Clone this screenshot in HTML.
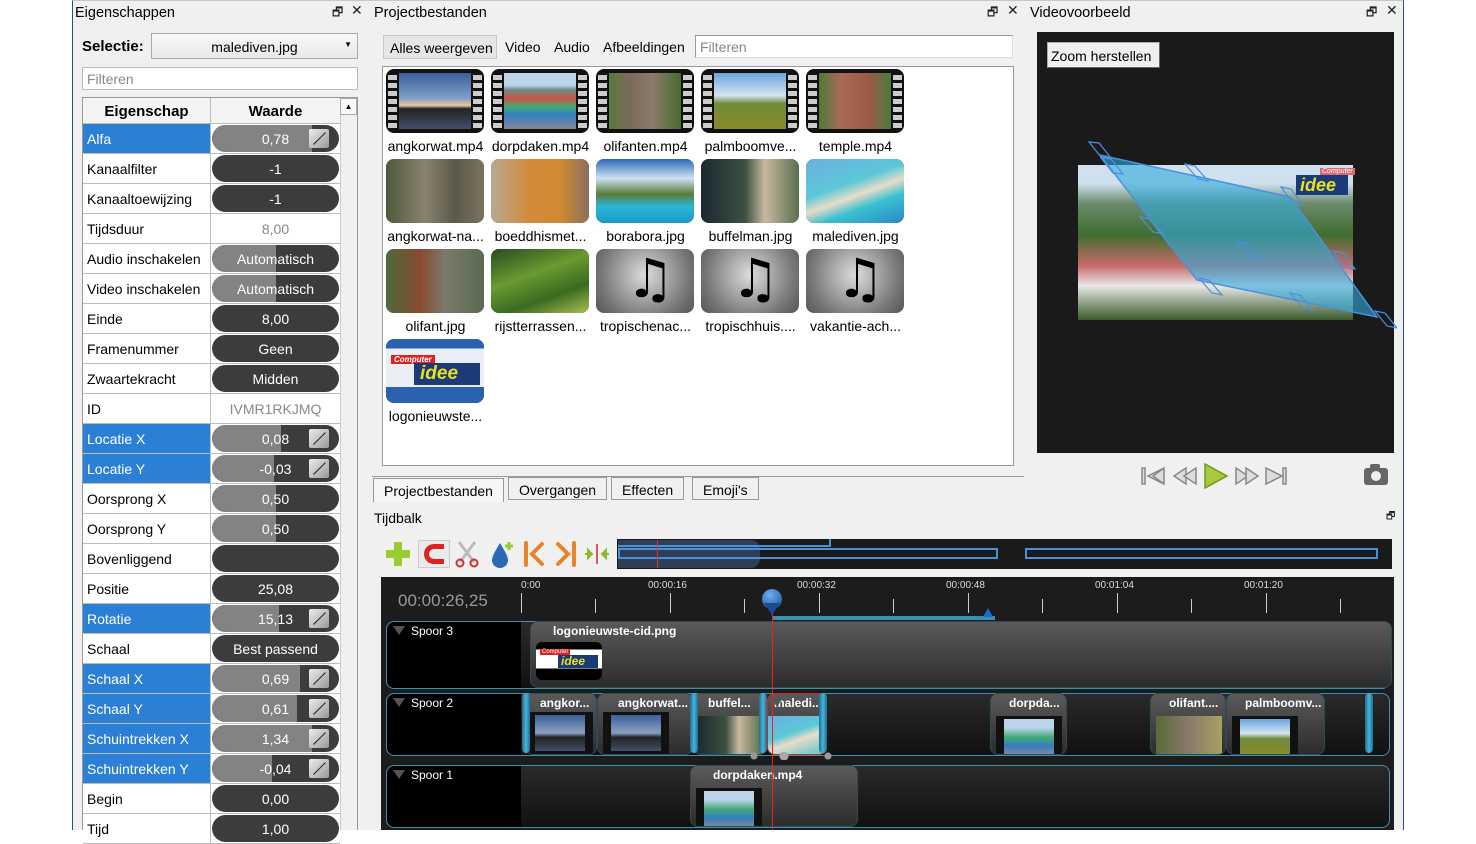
<!DOCTYPE html>
<html><head><meta charset="utf-8">
<style>
*{margin:0;padding:0;box-sizing:border-box}
body{width:1476px;height:830px;background:#fff;position:relative;overflow:hidden;font-family:"Liberation Sans",sans-serif;font-size:14px;color:#000;white-space:nowrap}
.a{position:absolute}
.win{position:absolute;left:72px;top:0;width:1332px;height:830px;background:#f0f0f0;border-left:1px solid #2a4a8a;border-right:1px solid #2a4a8a;border-top:1px solid #c8c8c8}
.ttl{position:absolute;font-size:14.5px}
.ic{position:absolute;font-size:12px;color:#222}
.row{position:absolute;left:83px;width:257px;height:30px;border-bottom:1px solid #bcbcbc;background:#fff}
.row .n{position:absolute;left:0;top:0;width:128px;height:29px;padding:7px 0 0 4px;border-right:1px solid #bcbcbc;font-size:14px}
.row.b .n{background:#2b80d6;color:#fff}
.pill{position:absolute;left:129px;top:1px;width:127px;height:27px;border-radius:14px;background:#3c3c3c;overflow:hidden;color:#fff;text-align:center;line-height:29px;font-size:14px}
.pill .f{position:absolute;left:0;top:0;bottom:0;background:#838383}
.pill span{position:relative}
.cv{position:absolute;right:10px;top:4px;width:20px;height:19px;background:linear-gradient(135deg,#eee,#999);border-radius:2px}
.cv:after{content:"";position:absolute;left:2px;top:9px;width:17px;height:1px;background:#222;transform:rotate(-45deg)}
.pv{position:absolute;left:129px;top:0;width:127px;text-align:center;line-height:31px;color:#888}
.th{position:absolute;width:98px;height:64px;border-radius:8px;overflow:hidden;background:#111}
.th .im{position:absolute;left:13px;right:13px;top:4px;bottom:4px}
.th.p .im{left:0;right:0;top:0;bottom:0}
.th.v:before,.th.v:after{content:"";position:absolute;top:3px;bottom:3px;width:9px;background:repeating-linear-gradient(#111 0 3px,#ccc 3px 8px);left:2px}
.th.v:after{left:auto;right:2px}
.lb{position:absolute;width:105px;text-align:center;font-size:14px}
.mu{background:radial-gradient(circle at 50% 40%,#ddd,#777 70%,#555);}
.mu b{position:absolute;left:30px;top:0;font-size:54px;line-height:60px;color:#000;font-weight:normal;font-family:"DejaVu Sans",sans-serif}
.tab{position:absolute;top:477px;height:23px;border:1px solid #999;background:#f0f0f0;padding:4px 10px;font-size:14px}
.trk{position:absolute;left:386px;width:1004px;border:1px solid #3d8fae;border-radius:8px;background:linear-gradient(#2a2a2a,#111)}
.trh{position:absolute;left:0;top:0;width:134px;height:100%;background:#000;border-radius:8px 0 0 8px;color:#fff;padding:2px 0 0 24px;font-size:12px}
.trh:before,.clip .t:before{content:"";position:absolute;left:6px;top:4px;border-left:6px solid transparent;border-right:6px solid transparent;border-top:9px solid #555}
.clip{position:absolute;border-radius:8px;background:linear-gradient(#5a5a5a,#2c2c2c);border:1px solid #2e4a58;overflow:hidden}
.clip .t{position:absolute;left:0;top:0;right:0;color:#fff;font-weight:bold;font-size:12px;padding:2px 0 0 18px;overflow:hidden}
.clip .t:before{left:3px}
.ct{position:absolute;width:66px;height:42px;background:#111}
.ct .im{position:absolute;left:8px;right:8px;top:3px;bottom:3px}
.hd{position:absolute;width:8px;border-radius:4px;background:linear-gradient(90deg,#1b6f92,#4ab3d8,#1b6f92)}
.tk{position:absolute;width:1px;background:#ccc}
.tl{position:absolute;color:#ddd;font-size:10px}
</style></head><body>
<div class="win"></div>

<div class="ttl" style="left:75px;top:5px">Eigenschappen</div>
<div class="ic" style="left:332px;top:3px">🗗</div><div class="ic" style="left:351px;top:2px;font-size:14px">✕</div>
<div class="a" style="left:82px;top:38px;font-weight:bold;font-size:15px">Selectie:</div>
<div class="a" style="left:151px;top:33px;width:207px;height:26px;border:1px solid #aaa;background:linear-gradient(#f8f8f8,#e8e8e8);text-align:center;line-height:26px;font-size:14px">malediven.jpg<span style="position:absolute;right:5px;top:-2px;font-size:8px">▼</span></div>
<div class="a" style="left:82px;top:67px;width:276px;height:23px;border:1px solid #bbb;background:#fff;color:#888;padding:3px 4px;font-size:14px">Filteren</div>
<div class="a" style="left:82px;top:97px;width:276px;height:733px;border:1px solid #999;background:#fff"></div>
<div class="a" style="left:83px;top:98px;width:128px;height:26px;background:#f4f4f4;border-right:1px solid #bbb;border-bottom:1px solid #bbb;font-weight:bold;text-align:center;line-height:27px;font-size:15px">Eigenschap</div>
<div class="a" style="left:211px;top:98px;width:129px;height:26px;background:#f4f4f4;border-bottom:1px solid #bbb;font-weight:bold;text-align:center;line-height:27px;font-size:15px">Waarde</div>
<div class="a" style="left:340px;top:98px;width:17px;height:732px;background:#f0f0f0;border-left:1px solid #ccc"></div>
<div class="a" style="left:340px;top:98px;width:17px;height:17px;border:1px solid #aaa;background:#f8f8f8;font-size:8px;text-align:center;line-height:15px">▲</div>

<div class="row b" style="top:124px"><div class="n">Alfa</div><div class="pill"><div class="f" style="width:100px"></div><span>0,78</span><div class="cv"></div></div></div>
<div class="row" style="top:154px"><div class="n">Kanaalfilter</div><div class="pill"><span>-1</span></div></div>
<div class="row" style="top:184px"><div class="n">Kanaaltoewijzing</div><div class="pill"><span>-1</span></div></div>
<div class="row" style="top:214px"><div class="n">Tijdsduur</div><div class="pv">8,00</div></div>
<div class="row" style="top:244px"><div class="n">Audio inschakelen</div><div class="pill"><div class="f" style="width:64px"></div><span>Automatisch</span></div></div>
<div class="row" style="top:274px"><div class="n">Video inschakelen</div><div class="pill"><div class="f" style="width:64px"></div><span>Automatisch</span></div></div>
<div class="row" style="top:304px"><div class="n">Einde</div><div class="pill"><span>8,00</span></div></div>
<div class="row" style="top:334px"><div class="n">Framenummer</div><div class="pill"><span>Geen</span></div></div>
<div class="row" style="top:364px"><div class="n">Zwaartekracht</div><div class="pill"><span>Midden</span></div></div>
<div class="row" style="top:394px"><div class="n">ID</div><div class="pv">IVMR1RKJMQ</div></div>
<div class="row b" style="top:424px"><div class="n">Locatie X</div><div class="pill"><div class="f" style="width:69px"></div><span>0,08</span><div class="cv"></div></div></div>
<div class="row b" style="top:454px"><div class="n">Locatie Y</div><div class="pill"><div class="f" style="width:62px"></div><span>-0,03</span><div class="cv"></div></div></div>
<div class="row" style="top:484px"><div class="n">Oorsprong X</div><div class="pill"><div class="f" style="width:64px"></div><span>0,50</span></div></div>
<div class="row" style="top:514px"><div class="n">Oorsprong Y</div><div class="pill"><div class="f" style="width:64px"></div><span>0,50</span></div></div>
<div class="row" style="top:544px"><div class="n">Bovenliggend</div><div class="pill"></div></div>
<div class="row" style="top:574px"><div class="n">Positie</div><div class="pill"><span>25,08</span></div></div>
<div class="row b" style="top:604px"><div class="n">Rotatie</div><div class="pill"><div class="f" style="width:67px"></div><span>15,13</span><div class="cv"></div></div></div>
<div class="row" style="top:634px"><div class="n">Schaal</div><div class="pill"><span>Best passend</span></div></div>
<div class="row b" style="top:664px"><div class="n">Schaal X</div><div class="pill"><div class="f" style="width:88px"></div><span>0,69</span><div class="cv"></div></div></div>
<div class="row b" style="top:694px"><div class="n">Schaal Y</div><div class="pill"><div class="f" style="width:85px"></div><span>0,61</span><div class="cv"></div></div></div>
<div class="row b" style="top:724px"><div class="n">Schuintrekken X</div><div class="pill"><div class="f" style="width:100px"></div><span>1,34</span><div class="cv"></div></div></div>
<div class="row b" style="top:754px"><div class="n">Schuintrekken Y</div><div class="pill"><div class="f" style="width:60px"></div><span>-0,04</span><div class="cv"></div></div></div>
<div class="row" style="top:784px"><div class="n">Begin</div><div class="pill"><span>0,00</span></div></div>
<div class="row" style="top:814px"><div class="n">Tijd</div><div class="pill"><span>1,00</span></div></div>

<div class="ttl" style="left:374px;top:5px">Projectbestanden</div>
<div class="ic" style="left:987px;top:3px">🗗</div><div class="ic" style="left:1007px;top:2px;font-size:14px">✕</div>
<div class="a" style="left:383px;top:35px;width:114px;height:24px;border:1px solid #c8c8c8;background:#e6e6e6;padding:4px 6px;font-size:14px">Alles weergeven</div>
<div class="a" style="left:505px;top:39px;font-size:14px">Video</div>
<div class="a" style="left:554px;top:39px;font-size:14px">Audio</div>
<div class="a" style="left:603px;top:39px;font-size:14px">Afbeeldingen</div>
<div class="a" style="left:695px;top:35px;width:318px;height:23px;border:1px solid #999;border-right-color:#ddd;border-bottom-color:#ddd;background:#fff;color:#888;padding:3px 4px;font-size:14px">Filteren</div>
<div class="a" style="left:382px;top:66px;width:632px;height:400px;border:1px solid #999;background:#fff"></div>

<div class="th v" style="left:386px;top:69px"><div class="im" style="background:linear-gradient(#3a5f9a 0%,#7f9fc9 45%,#e8c7a0 58%,#222 64%,#41506a 100%)"></div></div>
<div class="th v" style="left:491px;top:69px"><div class="im" style="background:linear-gradient(#bcd3ea 0 22%,#6d8b8a 30%,#c54 45%,#4a7 60%,#347ec0 75%,#889 100%)"></div></div>
<div class="th v" style="left:596px;top:69px"><div class="im" style="background:linear-gradient(90deg,#5a7a3a,#7a6a5a 30%,#8b7b6a 60%,#4a6a30)"></div></div>
<div class="th v" style="left:701px;top:69px"><div class="im" style="background:linear-gradient(#6aa4dc,#d6e4f2 40%,#6f8b3a 55%,#8b8a2a)"></div></div>
<div class="th v" style="left:806px;top:69px"><div class="im" style="background:linear-gradient(90deg,#4c7a3a,#a86a55 30%,#9a5a48 70%,#4c7a3a)"></div></div>
<div class="lb" style="left:383px;top:138px">angkorwat.mp4</div>
<div class="lb" style="left:488px;top:138px">dorpdaken.mp4</div>
<div class="lb" style="left:593px;top:138px">olifanten.mp4</div>
<div class="lb" style="left:698px;top:138px">palmboomve...</div>
<div class="lb" style="left:803px;top:138px">temple.mp4</div>

<div class="th p" style="left:386px;top:159px"><div class="im" style="background:linear-gradient(90deg,#4d5a3a,#8a8270 40%,#5a5a48 70%,#7a7260)"></div></div>
<div class="th p" style="left:491px;top:159px"><div class="im" style="background:linear-gradient(90deg,#b8a890,#d28a3a 40%,#d08a30 70%,#8a7060)"></div></div>
<div class="th p" style="left:596px;top:159px"><div class="im" style="background:linear-gradient(#2a68b8,#cfe2f2 30%,#5a7a3a 55%,#29b8d8 75%,#1a98c8)"></div></div>
<div class="th p" style="left:701px;top:159px"><div class="im" style="background:linear-gradient(90deg,#1c2830,#3a5040 45%,#c8b8a0 65%,#5a7050)"></div></div>
<div class="th p" style="left:806px;top:159px"><div class="im" style="background:linear-gradient(160deg,#6ab0e0,#5cc8d8 40%,#e8dcc8 55%,#3ac0d0 70%,#2a88c8)"></div></div>
<div class="lb" style="left:383px;top:228px">angkorwat-na...</div>
<div class="lb" style="left:488px;top:228px">boeddhismet...</div>
<div class="lb" style="left:593px;top:228px">borabora.jpg</div>
<div class="lb" style="left:698px;top:228px">buffelman.jpg</div>
<div class="lb" style="left:803px;top:228px">malediven.jpg</div>

<div class="th p" style="left:386px;top:249px"><div class="im" style="background:linear-gradient(90deg,#4a6a3a,#8a4a30 35%,#7a7a6a 60%,#5a6a50)"></div></div>
<div class="th p" style="left:491px;top:249px"><div class="im" style="background:linear-gradient(160deg,#2a4a20,#6a9a30 40%,#3a6a20 70%,#a8c050)"></div></div>
<div class="th p mu" style="left:596px;top:249px"><b>♫</b></div>
<div class="th p mu" style="left:701px;top:249px"><b>♫</b></div>
<div class="th p mu" style="left:806px;top:249px"><b>♫</b></div>
<div class="lb" style="left:383px;top:318px">olifant.jpg</div>
<div class="lb" style="left:488px;top:318px">rijstterrassen...</div>
<div class="lb" style="left:593px;top:318px">tropischenac...</div>
<div class="lb" style="left:698px;top:318px">tropischhuis....</div>
<div class="lb" style="left:803px;top:318px">vakantie-ach...</div>

<div class="th p" style="left:386px;top:339px"><div class="im" style="background:linear-gradient(#2b62b0 0 15%,#e8eef4 15% 75%,#2b62b0 75%)"></div>
<div class="a" style="left:5px;top:16px;background:#d22;color:#fff;font-size:8px;padding:0 3px;font-style:italic;font-weight:bold">Computer</div>
<div class="a" style="left:28px;top:24px;width:66px;height:22px;background:#1a3a78;color:#e8e020;font-weight:bold;font-style:italic;font-size:19px;line-height:22px;padding-left:6px">idee</div></div>
<div class="lb" style="left:383px;top:408px">logonieuwste...</div>

<div class="a" style="left:372px;top:476px;width:652px;height:1px;background:#999"></div>
<div class="tab" style="left:373px;top:478px;height:24px;border-bottom:none;background:#f6f6f6">Projectbestanden</div>
<div class="tab" style="left:508px">Overgangen</div>
<div class="tab" style="left:611px">Effecten</div>
<div class="tab" style="left:692px">Emoji's</div>
<div class="a" style="left:374px;top:510px;font-size:14px">Tijdbalk</div>
<div class="ic" style="left:1386px;top:509px;font-size:10px">🗗</div>

<div class="a" style="left:386px;top:542px;width:24px;height:24px;background:linear-gradient(90deg,transparent 8px,#9c3 8px 16px,transparent 16px),linear-gradient(transparent 8px,#9c3 8px 16px,transparent 16px)"></div>
<div class="a" style="left:418px;top:540px;width:32px;height:28px;border:1px solid #ccc;background:#eaeaea"></div>
<div class="a" style="left:424px;top:544px;width:20px;height:20px;border:5px solid #d22;border-right:none;border-radius:10px 0 0 10px"></div>
<svg class="a" style="left:454px;top:540px" width="26" height="28"><path d="M5 2 L20 22 M21 2 L6 22" stroke="#bbb" stroke-width="3"/><circle cx="6" cy="23" r="3.5" fill="none" stroke="#c33" stroke-width="2"/><circle cx="20" cy="23" r="3.5" fill="none" stroke="#c33" stroke-width="2"/></svg>
<svg class="a" style="left:489px;top:540px" width="28" height="28"><path d="M11 3 C5 13 3 17 3 20 A8 8 0 0 0 19 20 C19 17 17 13 11 3Z" fill="#2a6ab0"/><path d="M20 2v8M16 6h8" stroke="#9c3" stroke-width="3"/></svg>
<svg class="a" style="left:522px;top:541px" width="26" height="26"><path d="M4 2v22" stroke="#e8842a" stroke-width="4" stroke-linecap="round"/><path d="M20 3 L10 13 L20 23" fill="none" stroke="#e8842a" stroke-width="4" stroke-linecap="round"/></svg>
<svg class="a" style="left:552px;top:541px" width="26" height="26"><path d="M22 2v22" stroke="#e8842a" stroke-width="4" stroke-linecap="round"/><path d="M6 3 L16 13 L6 23" fill="none" stroke="#e8842a" stroke-width="4" stroke-linecap="round"/></svg>
<svg class="a" style="left:583px;top:543px" width="28" height="22"><path d="M2 11h6M5 7l4 4-4 4Z" stroke="#8b3" stroke-width="2" fill="#8b3"/><path d="M14 1v20" stroke="#d22" stroke-width="1.5"/><path d="M26 11h-6M23 7l-4 4 4 4Z" stroke="#8b3" stroke-width="2" fill="#8b3"/></svg>
<div class="a" style="left:617px;top:539px;width:775px;height:30px;background:#1a1a1a"></div>
<div class="a" style="left:618px;top:540px;width:142px;height:28px;background:#2d3e55;border-radius:0 9px 9px 0"></div>
<div class="a" style="left:618px;top:548px;width:380px;height:11px;border:2px solid #4a8fd8"></div>
<div class="a" style="left:1025px;top:548px;width:353px;height:11px;border:2px solid #4a8fd8"></div>
<div class="a" style="left:618px;top:539px;width:213px;height:8px;border-bottom:2px solid #4a8fd8;border-right:2px solid #4a8fd8"></div>
<div class="a" style="left:657px;top:540px;width:1px;height:28px;background:#d33"></div>

<div class="a" style="left:381px;top:577px;width:1013px;height:253px;background:#1c1c1c"></div>
<div class="a" style="left:398px;top:591px;color:#999;font-size:17px">00:00:26,25</div>
<div class="tl" style="left:521px;top:580px">0:00</div>
<div class="tl" style="left:648px;top:580px">00:00:16</div>
<div class="tl" style="left:797px;top:580px">00:00:32</div>
<div class="tl" style="left:946px;top:580px">00:00:48</div>
<div class="tl" style="left:1095px;top:580px">00:01:04</div>
<div class="tl" style="left:1244px;top:580px">00:01:20</div>
<div class="tk" style="left:521px;top:593px;height:20px"></div><div class="tk" style="left:595px;top:599px;height:14px"></div>
<div class="tk" style="left:670px;top:593px;height:20px"></div><div class="tk" style="left:744px;top:599px;height:14px"></div>
<div class="tk" style="left:819px;top:593px;height:20px"></div><div class="tk" style="left:893px;top:599px;height:14px"></div>
<div class="tk" style="left:968px;top:593px;height:20px"></div><div class="tk" style="left:1042px;top:599px;height:14px"></div>
<div class="tk" style="left:1117px;top:593px;height:20px"></div><div class="tk" style="left:1191px;top:599px;height:14px"></div>
<div class="tk" style="left:1266px;top:593px;height:20px"></div><div class="tk" style="left:1340px;top:599px;height:14px"></div>
<div class="a" style="left:772px;top:616px;width:223px;height:4px;background:#3c8fae"></div>
<div class="a" style="left:983px;top:608px;border-left:5px solid transparent;border-right:5px solid transparent;border-bottom:9px solid #1a6ad0"></div>

<div class="trk" style="top:621px;height:68px"><div class="trh">Spoor 3</div></div>
<div class="trk" style="top:693px;height:63px"><div class="trh">Spoor 2</div></div>
<div class="trk" style="top:765px;height:63px"><div class="trh">Spoor 1</div></div>

<div class="clip" style="left:530px;top:621px;width:862px;height:67px"><div class="t" style="padding-left:22px">logonieuwste-cid.png</div>
<div class="a" style="left:5px;top:20px;width:66px;height:38px;border-radius:6px;background:linear-gradient(#000 0 20%,#fff 20% 70%,#000 70%)"><div class="a" style="left:4px;top:7px;background:#d22;color:#fff;font-size:6px;padding:0 2px">Computer</div><div class="a" style="left:22px;top:13px;width:40px;height:13px;background:#1a3a78;color:#e8e020;font-weight:bold;font-style:italic;font-size:12px;line-height:13px;padding-left:3px">idee</div></div></div>

<div class="clip" style="left:525px;top:693px;width:72px;height:62px"><div class="t" style="padding-left:14px">angkor...</div><div class="ct" style="left:1px;top:18px"><div class="im" style="background:linear-gradient(#3a5f9a,#8aa0c0 50%,#222 62%,#41506a)"></div></div></div>
<div class="clip" style="left:597px;top:693px;width:96px;height:62px"><div class="t" style="padding-left:20px">angkorwat...</div><div class="ct" style="left:5px;top:18px"><div class="im" style="background:linear-gradient(#3a5f9a,#8aa0c0 50%,#222 62%,#41506a)"></div></div></div>
<div class="clip" style="left:693px;top:693px;width:74px;height:62px"><div class="t" style="padding-left:14px">buffel...</div><div class="ct" style="left:2px;top:22px;background:linear-gradient(90deg,#1c2830,#3a5040 45%,#c8b8a0 65%,#5a7050)"></div></div>
<div class="clip" style="left:767px;top:693px;width:60px;height:62px;border-color:#d22"><div class="t" style="padding-left:6px">maledi...</div><div class="ct" style="left:0;top:22px;width:60px;background:linear-gradient(160deg,#6ab0e0,#5cc8d8 40%,#e8dcc8 55%,#3ac0d0)"></div></div>
<div class="hd" style="left:522px;top:693px;height:60px"></div>
<div class="hd" style="left:690px;top:693px;height:60px"></div>
<div class="hd" style="left:759px;top:693px;height:60px"></div>
<div class="hd" style="left:819px;top:693px;height:60px"></div>
<div class="hd" style="left:1365px;top:693px;height:60px"></div>
<div class="a" style="left:748px;top:752px;width:84px;height:8px;background:radial-gradient(circle at 6px 4px,#999 3px,transparent 4px),radial-gradient(circle at 36px 4px,#aaa 4px,transparent 5px),radial-gradient(circle at 80px 4px,#999 3px,transparent 4px)"></div>

<div class="clip" style="left:990px;top:693px;width:77px;height:62px"><div class="t">dorpda...</div><div class="ct" style="left:5px;top:22px"><div class="im" style="background:linear-gradient(#bcd3ea 0 25%,#4a7 50%,#347ec0 75%,#889)"></div></div></div>
<div class="clip" style="left:1150px;top:693px;width:76px;height:62px"><div class="t">olifant....</div><div class="ct" style="left:5px;top:22px;background:linear-gradient(90deg,#5a6a3a,#8a7a6a 50%,#a8a060)"></div></div>
<div class="clip" style="left:1226px;top:693px;width:99px;height:62px"><div class="t">palmboomv...</div><div class="ct" style="left:5px;top:22px"><div class="im" style="background:linear-gradient(#6aa4dc,#d6e4f2 40%,#6f8b3a 55%,#8b8a2a)"></div></div></div>
<div class="clip" style="left:690px;top:765px;width:168px;height:62px"><div class="t" style="padding-left:22px">dorpdaken.mp4</div><div class="ct" style="left:5px;top:22px"><div class="im" style="background:linear-gradient(#bcd3ea 0 25%,#4a7 50%,#347ec0 75%,#889)"></div></div></div>

<div class="a" style="left:772px;top:612px;width:1px;height:218px;background:#e22"></div>
<div class="a" style="left:762px;top:589px;width:20px;height:20px;border-radius:50%;background:radial-gradient(circle at 40% 30%,#6ab0f0,#1a4a90)"></div>
<div class="a" style="left:764px;top:603px;border-left:8px solid transparent;border-right:8px solid transparent;border-top:12px solid #1a4a90"></div>

<div class="ttl" style="left:1030px;top:5px">Videovoorbeeld</div>
<div class="ic" style="left:1366px;top:3px">🗗</div><div class="ic" style="left:1386px;top:2px;font-size:14px">✕</div>
<div class="a" style="left:1037px;top:32px;width:357px;height:421px;background:#1a1a1a"></div>
<div class="a" style="left:1047px;top:42px;width:113px;height:26px;background:#f0f0f0;border:1px solid #aaa;border-right-color:#666;border-bottom-color:#666;padding:5px 3px;font-size:14px">Zoom herstellen</div>
<div class="a" style="left:1078px;top:165px;width:275px;height:155px;background:linear-gradient(#cfe0ee 0 12%,#6a8a6a 25%,#3f6e2f 45%,#c76a6a 65%,#e8e8e8 78%,#3a5a2a 100%)"></div>
<div class="a" style="left:1320px;top:168px;background:#d86a70;color:#fff;font-size:7px;padding:0 2px;font-style:italic">Computer</div>
<div class="a" style="left:1296px;top:175px;width:52px;height:20px;background:#1a3a78;color:#e8e020;font-weight:bold;font-style:italic;font-size:18px;line-height:20px;padding-left:4px">idee</div>
<svg class="a" style="left:1037px;top:130px" width="360" height="210">
<polygon points="63,25 253,67 340,187 160,150" fill="rgba(50,170,220,.6)" stroke="#4a90e0" stroke-width="1.5"/>
<path d="M52,12 L62,13 L74,28 L64,27Z M64,28 L74,29 L86,44 L76,43Z M148,34 L158,36 L171,51 L161,49Z M244,57 L254,59 L266,75 L256,73Z M103,87 L113,89 L126,104 L116,102Z M200,112 L210,114 L222,130 L212,128Z M162,148 L172,150 L185,165 L175,163Z M253,163 L263,165 L276,180 L266,178Z M296,121 L306,123 L318,139 L308,137Z M338,181 L348,183 L360,198 L350,196Z" fill="none" stroke="#4a90e0" stroke-width="1.2"/>
</svg>

<svg class="a" style="left:1140px;top:462px" width="160" height="28">
<g fill="#ddd" stroke="#888" stroke-width="1.5">
<rect x="2" y="6" width="3" height="16"/><path d="M24 6 L8 14 L24 22Z"/><path d="M24 6 L13 14 L24 22" fill="none"/>
<path d="M46 6 L34 14 L46 22Z"/><path d="M56 6 L44 14 L56 22Z"/>
<path d="M96 6 L108 14 L96 22Z"/><path d="M106 6 L118 14 L106 22Z"/>
<path d="M126 6 L142 14 L126 22Z"/><rect x="143" y="6" width="3" height="16"/>
</g>
<path d="M65 2 L87 14 L65 26Z" fill="#a8c840" stroke="#6a9a20" stroke-width="1.5"/>
</svg>
<div class="a" style="left:1364px;top:468px;width:24px;height:17px;background:#666;border-radius:3px"></div>
<div class="a" style="left:1370px;top:464px;width:10px;height:5px;background:#666;border-radius:2px 2px 0 0"></div>
<div class="a" style="left:1371px;top:471px;width:10px;height:10px;border-radius:50%;background:#eee"></div>
</body></html>
